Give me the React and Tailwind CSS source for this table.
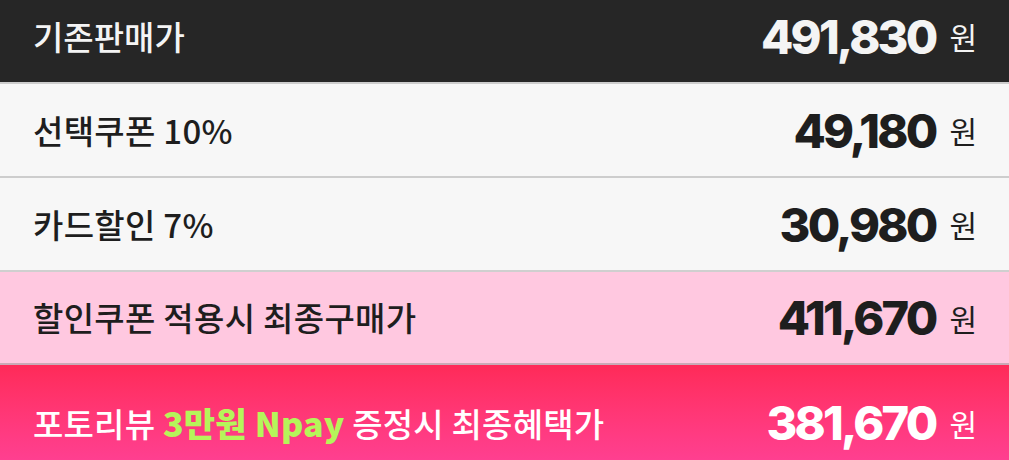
const rows = [
  {
    label: '선택쿠폰 10%',
    price: '49,180',
    row: 'h-[94px] bg-[#f7f7f7] border-t-2 border-[#cdcdcd] text-[#1e1e1e]',
  },
  {
    label: '카드할인 7%',
    price: '30,980',
    row: 'h-[94px] bg-[#f7f7f7] border-t-2 border-[#cdcdcd] text-[#1e1e1e]',
  },
  {
    label: '할인쿠폰 적용시 최종구매가',
    price: '411,670',
    row: 'h-[93px] bg-[#ffc8e0] border-t-2 border-[#cfcfcf] text-[#1e1e1e]',
  },
]

function Price({ value }) {
  return (
    <div className="flex items-center gap-[14px]">
      <span className="font-['Inter',sans-serif] font-extrabold text-[47px] leading-none tracking-[-2.8px]">
        {value}
      </span>
      <span className="text-[30px] leading-none">원</span>
    </div>
  )
}

export default function App() {
  return (
    <div className="w-[1009px] h-[460px] overflow-hidden flex flex-col font-['Noto_Sans_CJK_KR','Noto_Sans',sans-serif]">
      {/* 기존판매가 */}
      <div className="h-[82px] shrink-0 bg-[#262626] text-[#f4f4f4] flex items-center justify-between pl-[33px] pr-[32px] pb-[10px]">
        <span className="text-[33px] font-medium leading-none">기존판매가</span>
        <Price value="491,830" />
      </div>

      {rows.map((r) => (
        <div
          key={r.label}
          className={`${r.row} shrink-0 flex items-center justify-between pl-[33px] pr-[32px]`}
        >
          <span className="text-[33px] font-medium leading-none tracking-[0.3px]">{r.label}</span>
          <Price value={r.price} />
        </div>
      ))}

      {/* 최종혜택가 */}
      <div className="h-[97px] shrink-0 border-t-2 border-[#caa9b6] bg-gradient-to-b from-[#ff2a58] to-[#ff3f90] text-white flex items-center justify-between pl-[33px] pr-[32px] pt-[20px]">
        <span className="text-[33px] font-medium leading-none tracking-[0.2px]">
          포토리뷰 <span className="font-black text-[34px] text-[#b5f55a]">3만원 Npay</span> 증정시 최종혜택가
        </span>
        <Price value="381,670" />
      </div>
    </div>
  )
}
